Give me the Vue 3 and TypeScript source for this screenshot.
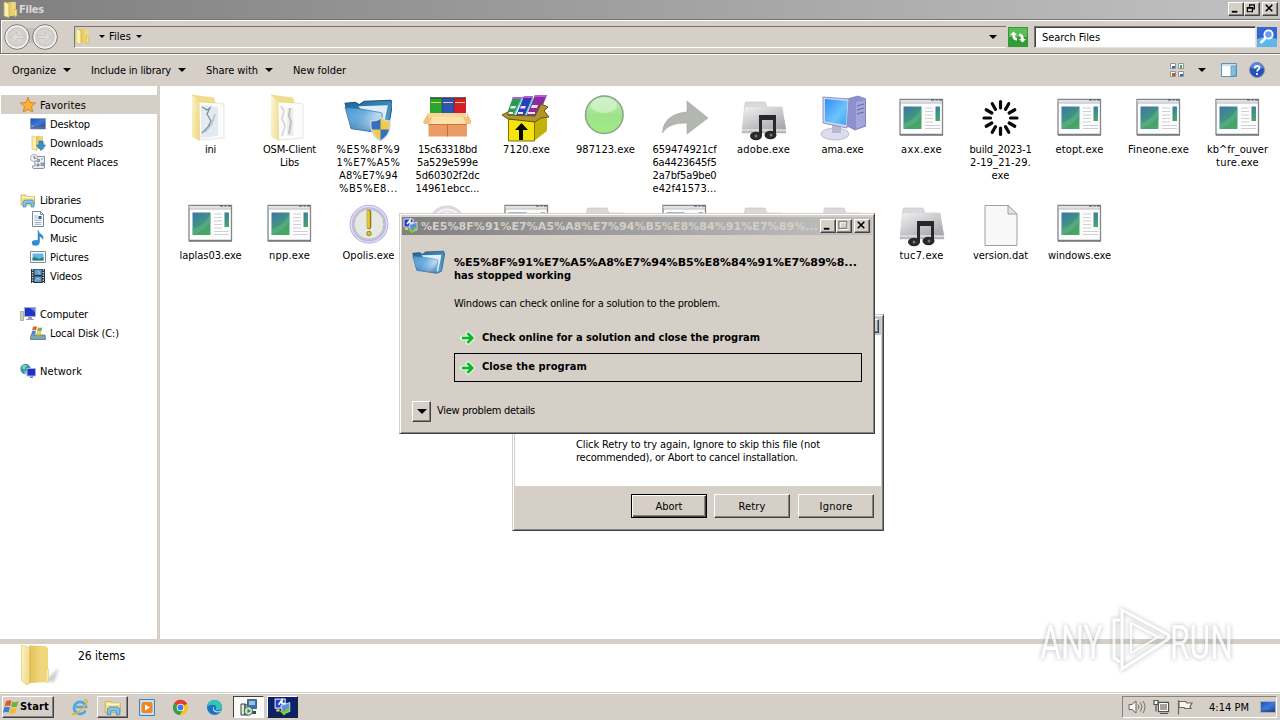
<script setup lang="ts">
import type { Directive } from 'vue'

interface Line { t: string; w: number }
interface FileItem { icon: string; lines: Line[] }
interface NavItem { icon: string; label: string; w: number; level: number; on?: boolean }

/** Spreads the letters of an element so that the text takes the given width. */
const vFit: Directive<HTMLElement, number> = {
  mounted(el, { value }) {
    const n = (el.textContent ?? '').length
    const natural = el.getBoundingClientRect().width
    if (n > 1) el.style.letterSpacing = `${((value - natural) / n).toFixed(3)}px`
  },
}

const file = (icon: string, ...pairs: (string | number)[]): FileItem => {
  const lines: Line[] = []
  for (let i = 0; i < pairs.length; i += 2) lines.push({ t: String(pairs[i]), w: Number(pairs[i + 1]) })
  return { icon, lines }
}

const files: FileItem[] = [
  file('folder', 'ini', 11),
  file('folder2', 'OSM-Client', 53, 'Libs', 19),
  file('blue', '%E5%8F%9', 64, '1%E7%A5%', 64, 'A8%E7%94', 59, '%B5%E8...', 59),
  file('crate', '15c63318bd', 59, '5a529e599e', 61, '5d60302f2dc', 64, '14961ebcc...', 64),
  file('rar', '7120.exe', 47),
  file('ball', '987123.exe', 59),
  file('arrow', '659474921cf', 64, '6a4423645f5', 64, '2a7bf5a9be0', 64, 'e42f41573...', 64),
  file('music', 'adobe.exe', 53),
  file('pc', 'ama.exe', 42),
  file('exe', 'axx.exe', 41),
  file('spin', 'build_2023-1', 62, '2-19_21-29.', 61, 'exe', 18),
  file('exe', 'etopt.exe', 48),
  file('exe', 'Fineone.exe', 61),
  file('exe', 'kb^fr_ouver', 61, 'ture.exe', 43),
  file('exe', 'laplas03.exe', 62),
  file('exe', 'npp.exe', 41),
  file('disc', 'Opolis.exe', 52),
  file('cd'),
  file('exe'),
  file('music'),
  file('exe'),
  file('music'),
  file('music'),
  file('music', 'tuc7.exe', 44),
  file('doc', 'version.dat', 55),
  file('exe', 'windows.exe', 63),
]

const groups: NavItem[][] = [
  [
    { icon: 'star', label: 'Favorites', w: 46, level: 0, on: true },
    { icon: 'desk', label: 'Desktop', w: 40, level: 1 },
    { icon: 'down', label: 'Downloads', w: 53, level: 1 },
    { icon: 'recent', label: 'Recent Places', w: 68, level: 1 },
  ],
  [
    { icon: 'lib', label: 'Libraries', w: 41, level: 0 },
    { icon: 'docs', label: 'Documents', w: 54, level: 1 },
    { icon: 'note', label: 'Music', w: 27, level: 1 },
    { icon: 'pic', label: 'Pictures', w: 39, level: 1 },
    { icon: 'film', label: 'Videos', w: 32, level: 1 },
  ],
  [
    { icon: 'comp', label: 'Computer', w: 48, level: 0 },
    { icon: 'disk', label: 'Local Disk (C:)', w: 69, level: 1 },
  ],
  [{ icon: 'net', label: 'Network', w: 42, level: 0 }],
]

const spokes = Array.from({ length: 12 }, (_, i) => i * 30)
</script>

<template>
  <div class="screen">
    <svg class="defs" width="0" height="0">
      <defs>
        <linearGradient id="gy" x1="0" x2="1"><stop offset="0" stop-color="#e3c052" /><stop offset="0.6" stop-color="#efd67c" /><stop offset="1" stop-color="#f0d878" /></linearGradient>
        <linearGradient id="gfl" x1="0" x2="1" y2="0.3"><stop offset="0" stop-color="#fbf3c4" /><stop offset="1" stop-color="#f0d888" /></linearGradient>
        <linearGradient id="gb" x1="0" x2="1" y2="0.5"><stop offset="0" stop-color="#3f8fcb" /><stop offset="0.5" stop-color="#5aa9df" /><stop offset="0.85" stop-color="#bfe0f5" /><stop offset="1" stop-color="#8cc3e8" /></linearGradient>
        <linearGradient id="gb2" x1="0" x2="0" y2="1"><stop offset="0" stop-color="#fff" stop-opacity="0" /><stop offset="1" stop-color="#155a9c" stop-opacity=".6" /></linearGradient>
        <linearGradient id="gbr" x1="0" x2="1" y2="1"><stop offset="0" stop-color="#1e6298" /><stop offset="1" stop-color="#5fa9d4" /></linearGradient>
        <linearGradient id="gexe" x1="0" y1="0" x2="0.5" y2="1"><stop offset="0" stop-color="#4272a8" /><stop offset="0.5" stop-color="#3f9088" /><stop offset="1" stop-color="#46a862" /></linearGradient>
        <linearGradient id="gs" x1="0" x2="0.7" y2="1"><stop offset="0" stop-color="#f1f1f3" /><stop offset="1" stop-color="#a5a6aa" /></linearGradient>
        <linearGradient id="gscr" x1="0" x2="1" y2="1"><stop offset="0" stop-color="#2f8ff0" /><stop offset="0.6" stop-color="#6cc4fb" /><stop offset="1" stop-color="#3aa5f2" /></linearGradient>
        <linearGradient id="gg" x1="0" y1="0" x2="0" y2="1"><stop offset="0" stop-color="#c5efb9" /><stop offset="0.5" stop-color="#9fe28c" /><stop offset="1" stop-color="#9eec83" /></linearGradient>
        <linearGradient id="gdesk" x1="0" x2="1" y2="1"><stop offset="0" stop-color="#1d4fb4" /><stop offset="0.5" stop-color="#3f79d8" /><stop offset="1" stop-color="#1b3f96" /></linearGradient>
        <radialGradient id="gnav"><stop offset="0" stop-color="#e4e2df" /><stop offset="0.75" stop-color="#cfccc8" /><stop offset="1" stop-color="#efeeec" /></radialGradient>
        <symbol id="yf" viewBox="0 0 16 16"><path d="M6 1h7v12.500L6 14.500Z" fill="url(#gy)" /><path d="M2 .8 6.500 2.500V15.500L2 14Z" fill="#fbf0ae" stroke="#d6b54b" stroke-width=".6" /><path d="M11.500 8H14v6l-2.500.5Z" fill="#f6e48e" stroke="#d2ad3c" stroke-width=".6" /></symbol>
        <symbol id="lib" viewBox="0 0 16 16"><path d="M1 3h5l1 1.5h7.5V13H1Z" fill="#f5df88" stroke="#d2b04b" stroke-width=".8" /><path d="M2 5.500h12" stroke="#fff7d0" stroke-width="1.300" /><path d="M3 15V9.500L5 8h7l2 1.500V15h-3v-3.500H6V15Z" fill="#7dc3ea" stroke="#3c88b9" stroke-width=".7" /></symbol>
        <symbol id="wer" viewBox="0 0 16 16"><path d="M1 1h9v8H1Z" fill="#1f3fd0" stroke="#d8dce8" stroke-width="1" /><path d="m4 6 3-4v3h3" fill="none" stroke="#fff" stroke-width="1.500" /><path d="M6 7 14 4v8l-6 2Z" fill="#5d8fda" stroke="#dfe9f5" stroke-width=".8" /><path d="m6 11 3 3 5-5" fill="none" stroke="#7bcb31" stroke-width="2.200" /><path d="M2 10h3v2H2z" fill="#e7d34a" /></symbol>
        <symbol id="garrow" viewBox="0 0 16 16"><path d="M2.500 8h9M8 3.500 12.500 8 8 12.500" fill="none" stroke="#d3f7d0" stroke-width="5" stroke-linejoin="round" stroke-linecap="round" /><path d="M2 8h10M7.500 3.200 12.300 8 7.500 12.800" fill="none" stroke="#12b02b" stroke-width="2.500" /></symbol>
        <symbol id="bluef" viewBox="0 0 48 36"><path d="M1 6 11 5l4 2.500L17 6l3-2 26-1 1.500 4L43 32l-6 3L7 30Z" fill="url(#gbr)" stroke="#1b567f" /><path d="m14 9 29-1-5 24-6 1Z" fill="#dfeefa" /><path d="m1 10 12 1 22 4q3 0 2.500 3L35 35 7 31Z" fill="url(#gb)" stroke="#2a6c9f" stroke-width=".7" /><path d="m1 10 12 1 22 4q3 0 2.500 3L35 35 7 31Z" fill="url(#gb2)" /></symbol>
      </defs>
    </svg>

    <header class="title">
      <svg class="i16"><use href="#yf" /></svg>
      <b v-fit="25">Files</b>
      <div class="wbtns">
        <i class="wb"><svg viewBox="0 0 16 14"><path d="M4 10.500h6" stroke="#000" stroke-width="2" /></svg></i>
        <i class="wb"><svg viewBox="0 0 16 14"><path d="M6 5V3h5v4.500H9.500M6 3h5.500" fill="none" stroke="#000" stroke-width="1.400" /><path d="M3.500 6h5.500v4.500H3.500ZM3.500 6.500H9" fill="none" stroke="#000" stroke-width="1.300" /></svg></i>
        <i class="wb gap"><svg viewBox="0 0 16 14"><path d="m4 3 7 7M11 3l-7 7" stroke="#000" stroke-width="1.700" /></svg></i>
      </div>
    </header>

    <div class="address">
      <svg class="navs" viewBox="0 0 56 28">
        <path d="M14 5h30v15H14Z" fill="#c3c0bc" />
        <g v-for="x in [13, 41]" :key="x">
          <circle :cx="x" cy="14" r="12.300" fill="url(#gnav)" stroke="#77757a" />
          <circle :cx="x" cy="14" r="10.800" fill="none" stroke="#f4f3f1" stroke-width="1.200" />
        </g>
        <path d="M20 12.500h-7V9l-6 5 6 5v-3.500h7ZM34 12.500h7V9l6 5-6 5v-3.500h-7Z" fill="#dedcd9" stroke="#c3c0bc" stroke-width=".8" />
      </svg>
      <div class="path">
        <svg class="i16"><use href="#yf" /></svg>
        <i class="tri s" /><span v-fit="22">Files</span><i class="tri s" />
        <i class="tri end" />
      </div>
      <svg class="refresh" viewBox="0 0 20 20"><rect width="20" height="20" fill="#2f9c36" /><rect x="1" y="1" width="18" height="9" fill="#5dbb58" /><path d="M9 13.500V11q-2 0-2-3h2L5.500 4.500 2 8h2.200q0 5.500 4.800 5.500ZM11 6.500V9q2 0 2 3h-2l3.500 3.500L18 12h-2.200q0-5.500-4.800-5.500Z" fill="#fff" /></svg>
      <div class="search"><span v-fit="58">Search Files</span></div>
      <svg class="go" viewBox="0 0 20 20"><rect width="20" height="20" fill="#3565cf" /><path d="M0 20V12Q10 8 20 12v8Z" fill="#5fb6ef" /><circle cx="11.500" cy="7.500" r="4.200" fill="#6e9be8" stroke="#fff" stroke-width="1.800" /><path d="m8.500 11-5 5" stroke="#fff" stroke-width="2.500" /></svg>
    </div>

    <nav class="commands">
      <span v-fit="44">Organize</span><i class="tri" />
      <span v-fit="80" class="c2">Include in library</span><i class="tri" />
      <span v-fit="52" class="c3">Share with</span><i class="tri" />
      <span v-fit="53" class="c4">New folder</span>
      <div class="tools">
        <svg width="16" height="16" viewBox="0 0 16 16"><g fill="#fff" stroke="#8f9398"><path d="M1.500 1.500h5v5h-5zM9.500 1.500h5v5h-5zM1.500 9.500h5v5h-5zM9.500 9.500h5v5h-5z" /></g><path d="M3 4h3v2H3z" fill="#2479b8" /><path d="M11 3h2v3h-2z" fill="#4aa343" /><path d="M3 11h3v3H3z" fill="#c3541b" /><path d="M11 12h3v2h-3z" fill="#3568b8" /></svg>
        <i class="tri" />
        <svg class="pane" width="16" height="14" viewBox="0 0 16 14"><path d="M.5.5h15v13H.5z" fill="#fdfeff" stroke="#5c93b9" /><path d="M1 1h14v2H1z" fill="#c8dff0" /><path d="M10 3h5v10h-5z" fill="#7fbfe0" stroke="#5c93b9" stroke-width=".7" /></svg>
        <svg width="16" height="16" viewBox="0 0 16 16"><circle cx="8" cy="8" r="7.500" fill="#2550b5" stroke="#8993ab" /><path d="M2 6a6 6 0 0 1 12 0Q8 8 2 6Z" fill="#5d86dc" /><path d="M5.800 6.200q0-2.400 2.300-2.400t2.300 2q0 1.200-1.200 1.900T8 9.500M8 11v2" fill="none" stroke="#fff" stroke-width="1.700" /></svg>
      </div>
    </nav>

    <main class="body">
      <aside class="tree">
        <div v-for="(g, gi) in groups" :key="gi" class="group">
          <div v-for="n in g" :key="n.label" class="node" :class="{ sub: n.level === 1, on: n.on }">
            <svg width="16" height="16" viewBox="0 0 16 16">
              <path v-if="n.icon === 'star'" d="m8 .5 2.200 5 5.300.5-4 3.600 1.200 5.400L8 12.200 3.300 15l1.200-5.400-4-3.600 5.300-.5Z" fill="#fbb436" stroke="#d9761c" stroke-width=".9" />
              <template v-else-if="n.icon === 'desk'"><path d="M.5 2.500h15v10.500H.5z" fill="url(#gdesk)" stroke="#8a9bb5" stroke-width=".8" /><path d="M1 11.500h14" stroke="#5b6c80" stroke-width="1.500" /><path d="M1.500 10h2" stroke="#9fd0f8" /></template>
              <template v-else-if="n.icon === 'down'"><use href="#yf" /><path d="M9 6h4v4h2.500L11 15.500 6.500 10H9Z" fill="#2e93d8" stroke="#1b68a8" stroke-width=".6" /></template>
              <template v-else-if="n.icon === 'recent'"><path d="M4.500 2.500h10V12q1 2.500-1.500 2.500H3.500Q2 14 2.500 12H5Z" fill="#e9edf1" stroke="#8492a2" /><path d="M7 5.500h2.500v2H7zM11 5h2M11 9h2.500v2.500H11zM7 10h2v2H7z" fill="#b4c2d2" stroke="#6b7989" stroke-width=".8" /><circle cx="4" cy="4" r="3.500" fill="#f6f8fa" stroke="#8c98a6" stroke-width=".8" /><path d="M4 2v2.200h2" fill="none" stroke="#596675" /></template>
              <use v-else-if="n.icon === 'lib'" href="#lib" />
              <template v-else-if="n.icon === 'docs'"><path d="M2.500.5h8l3 3v12h-11z" fill="#fbfcfe" stroke="#7a8797" /><path d="M10.500.5v3h3" fill="none" stroke="#7a8797" /><path d="M4.500 5h3M4.500 7h3M4.500 11.500h7M4.500 13.300h7M4.500 9.300h7" stroke="#9db0c8" /><path d="M8.500 5h3v3h-3z" fill="#2c5dab" /></template>
              <path v-else-if="n.icon === 'note'" d="M8 0q.5 3 3 4.200 3 1.800 2 5-.8-2.200-3.500-2.700V12q0 3.500-4 3.500-3.500 0-3.500-2.500 0-2.700 3.500-2.700H8Z" fill="#2c93d6" stroke="#1d6eab" stroke-width=".4" />
              <template v-else-if="n.icon === 'pic'"><path d="M.5 2.500h15v11H.5z" fill="#fff" stroke="#7e8b98" /><path d="M2.500 4.500h11v7h-11z" fill="#5db8e9" /><path d="M2.500 11.500V9L5 8l4 2 4.500-2v3.500Z" fill="#2f7d67" /></template>
              <template v-else-if="n.icon === 'film'"><path d="M1 1h14v14H1z" fill="#2a343e" /><path d="M4.500 1.500h7V7h-7zM4.500 8.500h7V14h-7z" fill="#5a9ccd" /><path d="M2.700 1.500V15M13.300 1.500V15" stroke="#e8ecf0" stroke-width="1.300" stroke-dasharray="1.300 1.200" /><path d="m5 13 3-3 2 2M8 3l2 3" fill="none" stroke="#a5cbe6" /></template>
              <template v-else-if="n.icon === 'comp'"><path d="M.5 5.500h3v9h-3z" fill="#c9d2bc" stroke="#8f9a86" stroke-width=".7" /><path d="M4.500 1.500h11v9h-11z" fill="#2234c4" stroke="#a9aecb" /><path d="M10 2h5v4Z" fill="#6a80ee" /><path d="M8 11h4v2h2v1H6v-1h2Z" fill="#9b9fb5" /></template>
              <template v-else-if="n.icon === 'disk'"><path d="M1 10h14l.500 4.500H.5Z" fill="#7ea5b8" stroke="#4d7488" stroke-width=".8" /><path d="M3 2q2.500-1.500 4 0L6 5.500q-2-1-4 0Z" fill="#e8602a" /><path d="M8 2.200q2 1.200 4.500 0L11.500 6q-2 1-4.500 0Z" fill="#79b943" /><path d="M2 6.300q2-1 4 0L5 10q-2-1-4 0Z" fill="#3c86d4" /><path d="M7 6.800q2 1.200 4.500 0l-1 3.500H6Z" fill="#f3bf2d" /></template>
              <template v-else><circle cx="5.500" cy="6" r="5.200" fill="#3497b9" /><path d="M2 3q3-2 5 0-2 1-2 3-3 1-3-3ZM4 9q2-2 3 0v2H5Z" fill="#86d39c" /><path d="M7 5.500h8.500v7.500H7z" fill="#1e30cc" stroke="#a8b2dd" /><path d="M10 13.500h3v1.500h-3z" fill="#777f9c" /></template>
            </svg>
            <span v-fit="n.w">{{ n.label }}</span>
          </div>
        </div>
      </aside>

      <section class="files">
        <div v-for="(f, fi) in files" :key="fi" class="file">
          <svg width="48" height="48" viewBox="0 0 48 48">
            <template v-if="f.icon === 'folder' || f.icon === 'folder2'">
              <path d="M12 6 38 10v34L14 46Z" fill="#fcfcfb" stroke="#dededb" stroke-width=".8" />
              <path d="M6 1 28 4l1 5L14 8Z" fill="#f2dd8c" stroke="#e5cd75" stroke-width=".5" />
              <template v-if="f.icon === 'folder'"><path d="M15 11 32 13v29l-17 2Z" fill="#e3ebf0" /><path d="m16 13 5 3 3-2-3 6 4 7-3 6-6 6" fill="none" stroke="#7e8d98" stroke-width="1.300" /><path d="m29 20-3 10-7 8" fill="none" stroke="#b4c1ca" stroke-width="1.500" /></template>
              <template v-else><path d="m16 12 3 5-2 8 3 7-3 10" fill="none" stroke="#dad9e3" stroke-width="2" /><path d="M22 14h7v28h-7z" fill="#ededee" /><path d="m25 14-1 8 2 6-2 12" fill="none" stroke="#c0c0c4" stroke-width="2" /><path d="M29.500 12v32" stroke="#fff" stroke-width="2" /></template>
              <path d="M6 1 13.500 8 14 47 6 43Z" fill="url(#gfl)" :opacity="f.icon === 'folder' ? 1 : 0.8" />
            </template>
            <template v-else-if="f.icon === 'blue'">
              <use href="#bluef" x="0" y="3" width="49" height="37" />
              <path d="M27 27q6 0 9.500-3.500Q40 27 46 27q1 14-9.500 19.500Q26 41 27 27Z" fill="#f0cb45" stroke="#cfd6dd" stroke-width="1.500" /><path d="M36.500 25v10.500H28q-1-4-.5-8 6 0 9-2.500ZM36.500 35.500H45q-2 7-8.500 10.500Z" fill="#3271c2" />
            </template>
            <template v-else-if="f.icon === 'crate'">
              <path d="M7 4h12v18H7z" fill="#27a52d" /><path d="M19 4h12v18H19z" fill="#2c53b5" /><path d="M31 4h12v18H31z" fill="#d61d2c" /><path d="M7 3.300h36v1.200H7z" fill="#3d3030" /><path d="M8 8.500h10M20 8.500h10M32 8.500h10" stroke="#e9d26a" stroke-width="1.200" /><path d="M19 5v15M31 5v15" stroke="#1a1a50" stroke-width=".8" opacity=".5" />
              <path d="M5.500 27h38.500v15.500H5.500z" fill="#eb9c64" /><path d="M5.500 30.500h38.500" stroke="#cf7443" /><path d="M5 19h38v9H5z" fill="#f9d595" /><path d="M5 19 0 28l1 2h5l4-7h29l4 7h4l2-2-5-9v4H5Z" fill="#f5c07e" /><path d="M9 23h31l3 7H6Z" fill="#fce2a8" /><path d="M24.500 31v11.500" stroke="#c96a3a" />
            </template>
            <template v-else-if="f.icon === 'rar'">
              <path d="M11 3h10l-9 19H4Z" fill="#2c9a4e" /><path d="M22 2h9l-8 20h-9Z" fill="#2a3fb5" /><path d="M33 1h12l-9 22H24Z" fill="#8c2b9c" /><path d="M11 3h10l-1 2H10ZM22 2h9l-1 2h-9ZM33 1h12l-1 2H32Z" fill="#c05ad0" /><path d="M9 12h5l-1 2.500H8ZM19 12h5l-1 2.500h-5ZM30 11h6l-1 3h-6ZM6 18h5v2H6ZM16 18h5v2h-5ZM26 18h7v2h-7Z" fill="#e9e6f1" /><path d="M20 4l-8 17M31 4l-8 18" stroke="#4fd0cd" stroke-width="1.300" />
              <path d="m32 26 13-7v18L32 47Z" fill="#c2b20a" /><path d="M6.500 25.500h26v21.500h-26Z" fill="#f4e30d" stroke="#827305" /><path d="m6 25-6-4 6-3v3l27 1 6-12 7 3-4 4 5 6-8 1-6 4Z" fill="#b1952a" stroke="#665411" /><path d="M17 46V36h-4l6.500-7 6.500 7h-5v10Z" fill="#080800" />
            </template>
            <template v-else-if="f.icon === 'ball'"><circle cx="23.300" cy="20.800" r="18.800" fill="url(#gg)" stroke="#8ba488" stroke-width="1.500" /><ellipse cx="23" cy="11.500" rx="13" ry="7.500" fill="#def6d6" opacity=".6" /></template>
            <path v-else-if="f.icon === 'arrow'" d="M2.500 39C3 25 14 19 27 18V7L48 24 27 40V29C14 29 7 32 2.500 39Z" fill="#b4b6b0" stroke="#a5a7a1" stroke-width=".6" />
            <template v-else-if="f.icon === 'music'">
              <path d="M6 9q0-1 1.500-1H26l2 5h15l4 26H3Z" fill="#d9d9dc" stroke="#c4c4c8" stroke-width=".6" /><path d="M6 13h37l4 22v4H3v-4Z" fill="url(#gs)" /><path d="M3 35.500h44v3H3z" fill="#bdbdc1" /><path d="M3 36h44" stroke="#f5f5f7" />
              <path d="M20 21h17v5H23v16h-3ZM34 22h3v19h-3z" fill="#28282b" /><ellipse cx="17" cy="42" rx="6" ry="4.200" fill="#28282b" /><ellipse cx="31.500" cy="41" rx="6" ry="4.200" fill="#28282b" /><circle cx="17" cy="42" r="1.500" fill="#777" /><circle cx="32" cy="41" r="1.500" fill="#777" />
            </template>
            <template v-else-if="f.icon === 'pc'">
              <path d="m29 5 11-3 8 3v27l-11 4-8-4Z" fill="#8d90cf" stroke="#7375b3" stroke-width=".7" /><path d="m38 8 9-2v25l-9 4Z" fill="#a3a5dc" /><path d="m39 12 7-2M39 16l7-2M39 20l7-2" stroke="#6668a7" /><ellipse cx="17" cy="40" rx="14" ry="6" fill="#dcdcec" stroke="#b0b0cc" stroke-width=".8" /><path d="M14 30h9v9h-9z" fill="#b7b7d4" />
              <path d="m5 3 26 2-2 29-24-5Z" fill="#cfd4f1" stroke="#8c92c1" /><path d="m7 5 22.500 2-1.500 24L7 27.500Z" fill="url(#gscr)" />
            </template>
            <template v-else-if="f.icon === 'exe'">
              <path d="M3 5.500h42.500V40.500H3Z" fill="#fdfdfd" stroke="#83868a" stroke-width="1.300" /><path d="M3.500 6H45v2.500H3.500z" fill="#dfe2e6" /><path d="M34 6h3M38.500 6h2M42 6h3" stroke="#454b55" /><path d="M3 9h42" stroke="#a3a6ab" stroke-width=".8" /><path d="M3 41h43" stroke="#777a7d" stroke-width="1.500" />
              <path d="M6.500 12.500h18v22.500h-18z" fill="url(#gexe)" /><path d="M6.500 29Q18 26 24.500 14v8Q17 32 6.500 35Z" fill="#79c788" opacity=".35" /><path d="M38.500 12.500h4.500V27h-4.500z" fill="url(#gexe)" /><path d="M28 14h8M28 17.500h8M28 21h8M28 24.500h8M28 28h8M28 31.500h15M28 34.500h15" stroke="#c8cacd" stroke-width=".9" />
            </template>
            <g v-else-if="f.icon === 'spin'" stroke="#090909" stroke-width="3.200" stroke-linecap="round"><path v-for="a in spokes" :key="a" d="M24.500 7.500v6.500" :transform="`rotate(${a} 24.500 24)`" /></g>
            <template v-else-if="f.icon === 'disc'">
              <circle cx="25" cy="24.300" r="17.500" fill="#e6e8e2" stroke="#bcb8de" stroke-width="4" /><circle cx="25" cy="24.300" r="17.800" fill="none" stroke="#e2e0f3" stroke-width="1.300" /><circle cx="25" cy="24.300" r="15" fill="none" stroke="#b0afbd" stroke-width=".9" /><path d="M25 12v15" stroke="#8c7522" stroke-width="4.500" stroke-linecap="round" /><path d="M24.500 12v15" stroke="#e9c42c" stroke-width="2.800" stroke-linecap="round" /><circle cx="25" cy="33.500" r="2.300" fill="#e2bd2a" stroke="#8c7522" stroke-width=".8" />
            </template>
            <template v-else-if="f.icon === 'cd'"><circle cx="24" cy="24" r="17" fill="#f5f5f5" stroke="#d9d9e2" stroke-width="3" /><circle cx="24" cy="24" r="13" fill="none" stroke="#d6d5dd" /></template>
            <template v-else><path d="M9 5.500h23L41 14v31.500H9Z" fill="#f8f8f8" stroke="#a0a0a0" /><path d="M32 5.500V14h9Z" fill="#e4e4e4" stroke="#a0a0a0" /></template>
          </svg>
          <div v-for="l in f.lines" :key="l.t" class="line"><span v-fit="l.w">{{ l.t }}</span></div>
        </div>
      </section>
    </main>

    <footer class="details">
      <svg width="48" height="44" viewBox="0 0 48 44"><defs><filter id="soft"><feGaussianBlur stdDeviation="1.500" /></filter></defs><path d="m30 37 14-13-5 14Z" fill="#c6cacd" filter="url(#soft)" /><path d="M14 1.500 30 2l3 2v34l-18 1Z" fill="url(#gy)" /><path d="M6.500 1 16 4v34l-4 3-5.500-4Z" fill="url(#gfl)" stroke="#e6cf7c" stroke-width=".7" /><path d="m16 4-1.500 1v35l1.500-2Z" fill="#d9b64e" /><path d="M31 25h2.500v13H31Z" fill="#f9eaa5" stroke="#dfc269" stroke-width=".5" /></svg>
      <span v-fit="47">26 items</span>
    </footer>

    <div class="taskbar">
      <div class="start raised">
        <svg width="17" height="16" viewBox="0 0 17 16"><path d="M3 2.500q3-2 5.500-.5L7.200 7Q4.500 6 1.500 7.500Z" fill="#e45a26" /><path d="M9.500 2.500q3 1.500 6-.5L14 7.500q-3 1.500-6 0Z" fill="#6fb33d" /><path d="M1.200 8.500Q4 7 7 8.300L5.500 13.500q-2.500-1.200-5.500.3Z" fill="#3b82cf" /><path d="M7.800 8.800q3 1.200 6 0L12.300 14q-3 1.500-6 0Z" fill="#f3bc28" /></svg>
        <b v-fit="29">Start</b>
      </div>
      <div class="task ie"><svg width="18" height="18" viewBox="0 0 18 18"><path d="M14.500 12.500A6 6 0 1 1 15 9H5" fill="none" stroke="#49a9e1" stroke-width="2.700" /><path d="M2 15Q0 18 5 15.500 13 11 16 4q1-3.500-3-1.500" fill="none" stroke="#e8b434" stroke-width="1.500" /></svg></div>
      <div class="task raised"><svg width="18" height="18"><use href="#lib" /></svg></div>
      <div class="task wmp"><svg width="16" height="17" viewBox="0 0 16 17"><path d="M.5.500h15v16H.5z" fill="#c7dff1" stroke="#3d82b9" /><rect x="2.500" y="3" width="11" height="11" rx="2" fill="#ef8620" /><path d="m6 5.500 5 3-5 3Z" fill="#fff" /></svg></div>
      <div class="task chrome"><svg width="17" height="17" viewBox="0 0 18 18"><circle cx="9" cy="9" r="8" fill="#fbc116" /><path d="M9 9 2 5a8 8 0 0 1 14 0Z" fill="#e33b2e" /><path d="M9 9 2 5a8 8 0 0 0 6 12l4-6Z" fill="#2da14e" /><circle cx="9" cy="9" r="4" fill="#fff" /><circle cx="9" cy="9" r="3.100" fill="#3e7de0" /></svg></div>
      <div class="task edge"><svg width="17" height="17" viewBox="0 0 18 18"><circle cx="9" cy="9" r="8" fill="#1c74c5" /><path d="M1 8Q2 1 9 1q7 .500 8 7 0 4-5 4-2 0-1.500-1.500Q12 6 7 6 3 6 1 8Z" fill="#35c5b5" /><path d="M9 8q-2 3 1 4.500 3 1.500 6.500-.5-2 3-5.500 2Q7 13 7.500 10q.5-2 1.500-2Z" fill="#d5ebf4" /></svg></div>
      <div class="task pressed"><svg width="19" height="19" viewBox="0 0 19 19"><path d="M8.500 1.500h9v9h-9z" fill="#3d73b1" stroke="#586371" /><path d="M10 3h6v4h-6z" fill="#8cc7e4" /><path d="M2 6h4v11H2zM6 6v11h3V8Z" fill="#e6e6df" stroke="#39453f" /><path d="M11 13h6v3h-6z" fill="#3a4d54" /><circle cx="9.500" cy="13" r="4.200" fill="#c9ded1" stroke="#376c4a" /><path d="M8.500 11v4l3.500-2Z" fill="#28814b" /></svg></div>
      <div class="task navy"><svg width="18" height="18"><use href="#wer" /></svg></div>
      <div class="tray">
        <svg width="18" height="16" viewBox="0 0 18 16"><path d="M1 5.500h3L8 2v12l-4-3.500H1Z" fill="#f7f7f5" stroke="#66635f" /><path d="M10 5.500q2 2.500 0 5M12.500 3.500q3 4.500 0 9M15 2q4 6 0 12" fill="none" stroke="#77736e" /></svg>
        <svg class="t2" width="17" height="16" viewBox="0 0 17 16"><path d="M5.500 3.500h10v9h-10z" fill="#a4a19d" stroke="#555350" stroke-width="1.300" /><path d="M6.500 4.500h8v7h-8z" fill="none" stroke="#fff" /><path d="M1 1.500h4v4H1zM3 6v6.500M7 14.500h8" fill="#fff" stroke="#55524e" stroke-width="1.200" /></svg>
        <svg class="t3" width="16" height="16" viewBox="0 0 16 16"><path d="M1.500 1v14.500M2 2.500h6.500L10 4h5l-2 3.500 1 2H8L7 8.500H2Z" fill="#f6f5f2" stroke="#6c6965" stroke-width="1.200" /></svg>
        <span v-fit="40">4:14 PM</span>
        <svg class="t4" width="16" height="14" viewBox="0 0 16 14"><path d="M.5 1.500h15v11H.5z" fill="url(#gdesk)" stroke="#a8b0bd" /><path d="M1 11h14" stroke="#30405e" /></svg>
      </div>
    </div>

    <section class="window setup">
      <div class="setup-bar"><i class="wb"><svg viewBox="0 0 16 14"><path d="m4 3 7 7M11 3l-7 7" stroke="#000" stroke-width="1.700" /></svg></i></div>
      <div class="setup-body">
        <p><span v-fit="244">Click Retry to try again, Ignore to skip this file (not</span></p>
        <p><span v-fit="222">recommended), or Abort to cancel installation.</span></p>
      </div>
      <div class="setup-btns">
        <button class="def"><span v-fit="27">Abort</span></button>
        <button><span v-fit="27">Retry</span></button>
        <button><span v-fit="33">Ignore</span></button>
      </div>
    </section>

    <section class="window crash">
      <header class="crash-bar">
        <svg width="16" height="16"><use href="#wer" /></svg>
        <b v-fit="397" class="wide">%E5%8F%91%E7%A5%A8%E7%94%B5%E8%84%91%E7%89%...</b>
        <div class="wbtns">
          <i class="wb"><svg viewBox="0 0 16 14"><path d="M4 10.500h6" stroke="#000" stroke-width="2" /></svg></i>
          <i class="wb"><svg viewBox="0 0 16 14"><path d="M3.500 3h8v7.500h-8Z" fill="none" stroke="#fff" transform="translate(1 1)" /><path d="M3 2.500h8.500V10H3Z" fill="none" stroke="#858280" stroke-width="1.300" /></svg></i>
          <i class="wb gap"><svg viewBox="0 0 16 14"><path d="m4 3 7 7M11 3l-7 7" stroke="#000" stroke-width="1.700" /></svg></i>
        </div>
      </header>
      <div class="crash-body">
        <svg class="bf" width="33" height="25"><use href="#bluef" /></svg>
        <div class="msg">
          <p><b v-fit="403" class="wide">%E5%8F%91%E7%A5%A8%E7%94%B5%E8%84%91%E7%89%8...</b></p>
          <p><b v-fit="117">has stopped working</b></p>
          <p class="hint"><span v-fit="266">Windows can check online for a solution to the problem.</span></p>
          <div class="choice"><svg width="16" height="16"><use href="#garrow" /></svg><b v-fit="278">Check online for a solution and close the program</b></div>
          <div class="choice boxed"><svg width="16" height="16"><use href="#garrow" /></svg><b v-fit="105">Close the program</b></div>
        </div>
      </div>
      <div class="more"><i class="drop"><i class="tri big" /></i><span v-fit="98">View problem details</span></div>
    </section>

    <svg class="mark" width="246" height="76" viewBox="0 0 246 76">
      <g class="glow">
        <text x="6" y="56" textLength="63" lengthAdjust="spacingAndGlyphs">ANY</text>
        <path d="M86 17h-6v38l6 4M88 7 133 31q4 3 0 6L88 66Z" fill="none" stroke-width="3" />
        <path d="M97 20v30l27-16Z" fill="none" stroke-width="2" />
        <text x="136" y="56" textLength="63" lengthAdjust="spacingAndGlyphs">RUN</text>
      </g>
    </svg>
  </div>
</template>

<style>
html, body { margin: 0; overflow: hidden; }
</style>

<style scoped>
.screen {
  position: relative; width: 1280px; height: 720px; overflow: hidden; display: flex; flex-direction: column;
  background: #fff; color: #000; font: 11px/13px "DejaVu Sans Condensed", "DejaVu Sans", sans-serif; font-stretch: condensed;
}
.screen * { box-sizing: border-box; }
.defs { position: absolute; }
svg { flex: none; display: block; }
span, b { display: inline-block; white-space: pre; flex: none; }
.wide { font-family: "DejaVu Sans", sans-serif; font-stretch: normal; }
p { margin: 0; height: 13px; }
.i16 { width: 17px; height: 17px; }
.tri { flex: none; width: 0; height: 0; border: 4px solid transparent; border-top-color: #000; border-bottom: 0; }
.tri.s { border-width: 3px; border-bottom: 0; }
.tri.big { border-width: 5px; border-bottom: 0; }

.title { height: 19px; flex: none; display: flex; align-items: center; padding: 0 2px; background: linear-gradient(90deg, #808080, #c1c1c1); }
.title b { color: #dcd9d4; margin: -1px 0 0; }
.wbtns { margin-left: auto; display: flex; }
.wb { width: 16px; height: 14px; background: #d5cfc8; border: 1px solid; border-color: #fff #424242 #424242 #fff; box-shadow: inset -1px -1px #858280; }
.wb svg { width: 15px; height: 13px; margin: -1px 0 0 -1px; }
.wb.gap { margin-left: 2px; }
.title .wbtns { margin-top: -1px; }

.address { height: 35px; flex: none; display: flex; align-items: center; padding-left: 2px; background: #d5cfc8; border-top: 1px solid #77736e; border-bottom: 1px solid #77736e; border-left: 1px solid #77736e; box-shadow: inset 1px 1px #fff; }
.navs { width: 56px; height: 28px; margin: 1px 0 0 1px; }
.path { width: 932px; height: 22px; margin: 1px 0 0 14px; display: flex; align-items: center; border-top: 1px solid #77736e; border-left: 1px solid #77736e; border-bottom: 1px solid #fff; }
.path .i16 { margin: -2px 0 0 -1px; }
.path .tri.s { margin: -1px 0 0 8px; }
.path span { margin: -2px 0 0 4px; }
.path .tri.s + span + .tri.s { margin-left: 5px; }
.path .end { margin: 0 9px 0 auto; }
.refresh { width: 20px; height: 20px; margin: 1px 0 0 2px; }
.search { width: 222px; height: 22px; margin: 1px 0 0 6px; background: #fff; border: 1px solid; border-color: #77736e #e6e2dd #e6e2dd #77736e; box-shadow: inset 1px 1px #424242; padding: 4px 0 0 7px; }
.go { width: 20px; height: 20px; margin: 0 0 0 1px; }

.commands { height: 32px; flex: none; display: flex; align-items: center; background: #d5cfc8; border-top: 1px solid #fff; padding: 0 15px 1px 12px; }
.commands > .tri { margin-left: 7px; }
.c2 { margin-left: 20px; }
.c3 { margin-left: 20px; }
.c4 { margin-left: 20px; }
.tools { margin-left: auto; display: flex; align-items: center; }
.tools .tri { margin: 0 15px 0 13px; }
.tools .pane { margin-right: 12px; }

.body { flex: none; height: 553px; display: flex; }
.tree { width: 160px; border-right: 3px solid #d5cfc8; padding: 9px 0 0 1px; }
.group { margin-bottom: 19px; }
.node { height: 19px; display: flex; align-items: center; padding-left: 19px; gap: 4px; }
.node.sub { padding-left: 29px; }
.node.on { background: #d5cfc8; }
.node svg { width: 16px; height: 16px; }
.node span { margin-top: 2px; }
.files { flex: 1; display: grid; grid-template-columns: repeat(14, 79px); grid-auto-rows: 106px; padding: 8px 0 0 11px; }
.file { display: flex; flex-direction: column; align-items: center; }
.file svg { margin-bottom: 1px; margin-right: 1px; }
.line { height: 13px; }

.details { height: 53px; flex: none; border-top: 5px solid #d5cfc8; display: flex; padding-left: 15px; }
.details svg { width: 48px; height: 44px; }
.details span { font-size: 12px; margin: 6px 0 0 15px; }

.taskbar { height: 28px; flex: none; display: flex; align-items: flex-start; background: #d5cfc8; border-top: 1px solid #d5cfc8; box-shadow: inset 0 1px #fff; padding: 3px 3px 0 2px; }
.raised { border: 1px solid; border-color: #fff #424242 #424242 #fff; box-shadow: inset -1px -1px #858280; }
.start { width: 52px; height: 22px; display: flex; align-items: center; }
.start b { margin: -1px 0 0; }
.task { width: 31px; height: 22px; display: flex; justify-content: center; align-items: center; flex: none; }
.ie { margin-left: 10px; }
.ie + .raised { margin-left: 2px; }
.wmp, .chrome, .edge { margin-left: 3px; }
.pressed { margin-left: 3px; background: #fafaf9; border: 1px solid; border-color: #424242 #fff #fff #424242; }
.navy { margin-left: 3px; background: #0b2268; border: 1px solid; border-color: #fff #222 #222 #fff; }
.tray { margin-left: auto; width: 155px; height: 22px; display: flex; align-items: center; border: 1px solid; border-color: #858280 #fff #fff #858280; padding-left: 5px; }
.t2 { margin-left: 7px; }
.t3 { margin-left: 7px; }
.tray span { margin-left: 16px; }
.t4 { margin-left: 11px; }

.window { position: absolute; background: #d5cfc8; border: 1px solid; border-color: #d5cfc8 #424242 #424242 #d5cfc8; box-shadow: inset 1px 1px #fff, inset -1px -1px #858280; }
.setup { left: 512px; top: 314px; width: 372px; height: 217px; padding: 2px; display: flex; flex-direction: column; }
.setup-bar { height: 18px; background: linear-gradient(90deg, #0a246a, #b7cbe2); display: flex; justify-content: flex-end; align-items: center; padding-right: 2px; }
.setup-body { height: 151px; background: #fff; padding: 103px 0 0 61px; }
.setup-btns { display: flex; gap: 8px; justify-content: flex-end; padding: 8px 7px 0 0; }
button { width: 76px; height: 24px; padding: 0; display: flex; justify-content: center; align-items: center; font: inherit; font-stretch: condensed; color: #000; background: #d5cfc8; border: 1px solid; border-color: #fff #424242 #424242 #fff; box-shadow: inset -1px -1px #858280; border-radius: 0; }
.def { margin-right: -1px; border-color: #000; box-shadow: inset 1px 1px #fff, inset -1px -1px #424242, inset -2px -2px #858280; }

.crash { left: 399px; top: 213px; width: 476px; height: 221px; padding: 3px 2px 2px; }
.crash-bar { height: 18px; display: flex; align-items: center; background: linear-gradient(90deg, #808080, #c1c1c1); padding: 0 1px; }
.crash-bar b { color: #d5cfc8; margin-left: 2px; }
.crash-bar .wbtns { margin-right: 1px; }
.crash-body { display: flex; }
.bf { margin: 14px 9px 0 10px; }
.msg { width: 408px; padding-top: 21px; }
.hint { margin-top: 15px; }
.choice { height: 29px; display: flex; align-items: center; padding-left: 6px; gap: 6px; margin-top: 13px; }
.choice svg { margin-top: 1px; }
.choice b { margin-top: -1px; }
.choice.boxed { border: 1px solid #000; margin-top: 1px; padding-left: 5px; }
.choice.boxed b { margin-top: -2px; }
.more { display: flex; align-items: center; margin: 19px 0 0 10px; gap: 6px; }
.more span { margin-top: -3px; }
.drop { width: 19px; height: 21px; display: flex; align-items: center; justify-content: center; border: 1px solid; border-color: #fff #424242 #424242 #fff; box-shadow: inset -1px -1px #858280; }

.mark { position: absolute; left: 1034px; top: 603px; pointer-events: none; overflow: visible; }
.glow { filter: drop-shadow(0 0 2px rgba(80, 80, 80, .42)) drop-shadow(0 0 2px rgba(110, 110, 110, .15)); opacity: .75; stroke: #fff; }
.glow text { font: 400 49px Roboto, sans-serif; fill: #fff; stroke: none; }
</style>
